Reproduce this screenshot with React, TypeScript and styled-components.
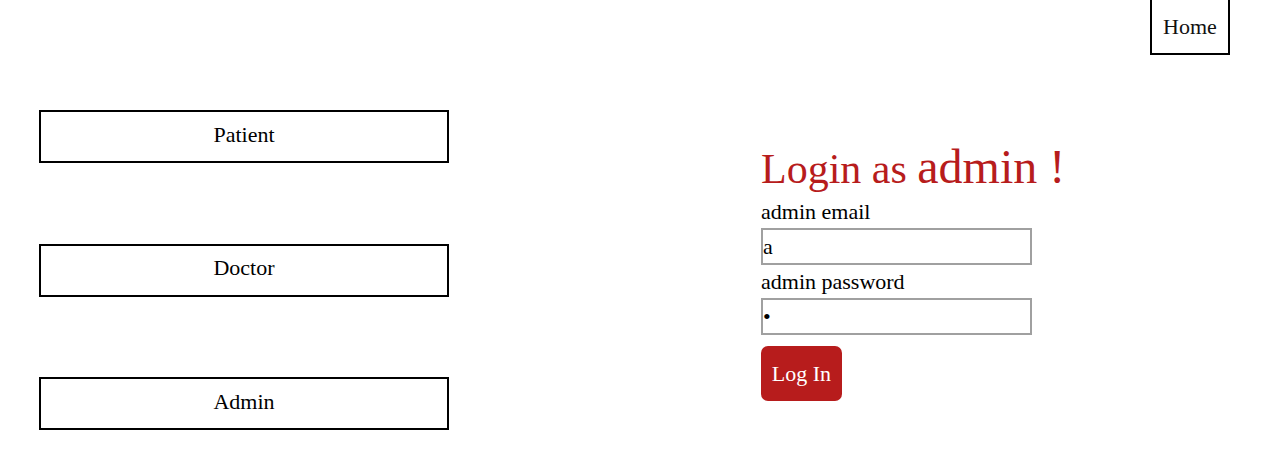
import React, { useState } from "react";
import styled, { createGlobalStyle } from "styled-components";

const GlobalStyle = createGlobalStyle`
  body {
    margin: 0;
    background: #ffffff;
    font-family: "Liberation Serif", "Times New Roman", serif;
    color: #000000;
  }
`;

const red = "#b71c1c";

const Page = styled.div`
  width: 1273px;
  height: 455px;
  overflow: hidden;
`;

const NavBar = styled.nav`
  display: flex;
  justify-content: flex-end;
  padding-right: 43px;
`;

const NavLink = styled.a`
  display: flex;
  align-items: center;
  justify-content: center;
  width: 80px;
  height: 55px;
  box-sizing: border-box;
  border: 2px solid #000;
  border-top: none;
  font-size: 22px;
  color: #111;
  text-decoration: none;
  cursor: pointer;
`;

const Main = styled.main`
  display: grid;
  grid-template-columns: 761px 1fr;
  align-items: center;
  margin-top: 55px;
`;

const RoleList = styled.div`
  display: flex;
  flex-direction: column;
  gap: 80.5px;
  padding-left: 39px;
`;

const RoleButton = styled.button`
  width: 410px;
  height: 53px;
  box-sizing: border-box;
  border: 2px solid #000;
  background: #fff;
  font-family: inherit;
  font-size: 22px;
  color: #000;
  padding: 0 0 4px;
  cursor: pointer;
`;

const Form = styled.form`
  display: flex;
  flex-direction: column;
  align-items: flex-start;
  padding-top: 2px;
`;

const Title = styled.h1`
  margin: 0 0 5px;
  font-size: 42px;
  font-weight: normal;
  color: ${red};
  line-height: 52px;
`;

const TitleRole = styled.span`
  font-size: 48px;
`;

const Label = styled.label`
  font-size: 22px;
  line-height: 23px;
`;

const Field = styled.input`
  width: 271px;
  height: 37px;
  box-sizing: border-box;
  margin: 5px 0;
  padding: 0;
  border: 2px solid #a0a0a0;
  font-family: inherit;
  font-size: 22px;
  color: #000;
  outline: none;
`;

const Submit = styled.button`
  margin-top: 6px;
  width: 81px;
  height: 55px;
  border: none;
  border-radius: 7px;
  background: ${red};
  color: #fff;
  font-family: inherit;
  font-size: 22px;
  cursor: pointer;
`;

const roles = ["Patient", "Doctor", "Admin"];

export default function App() {
  const [role, setRole] = useState("admin");
  const [email, setEmail] = useState("a");
  const [password, setPassword] = useState("a");

  return (
    <Page>
      <GlobalStyle />
      <NavBar>
        <NavLink>Home</NavLink>
      </NavBar>
      <Main>
        <RoleList>
          {roles.map((r) => (
            <RoleButton key={r} onClick={() => setRole(r.toLowerCase())}>
              {r}
            </RoleButton>
          ))}
        </RoleList>
        <Form onSubmit={(e) => e.preventDefault()}>
          <Title>
            Login as <TitleRole>{role} !</TitleRole>
          </Title>
          <Label htmlFor="email">{role} email</Label>
          <Field
            id="email"
            type="email"
            value={email}
            onChange={(e) => setEmail(e.target.value)}
          />
          <Label htmlFor="password">{role} password</Label>
          <Field
            id="password"
            type="password"
            value={password}
            onChange={(e) => setPassword(e.target.value)}
          />
          <Submit type="submit">Log In</Submit>
        </Form>
      </Main>
    </Page>
  );
}
